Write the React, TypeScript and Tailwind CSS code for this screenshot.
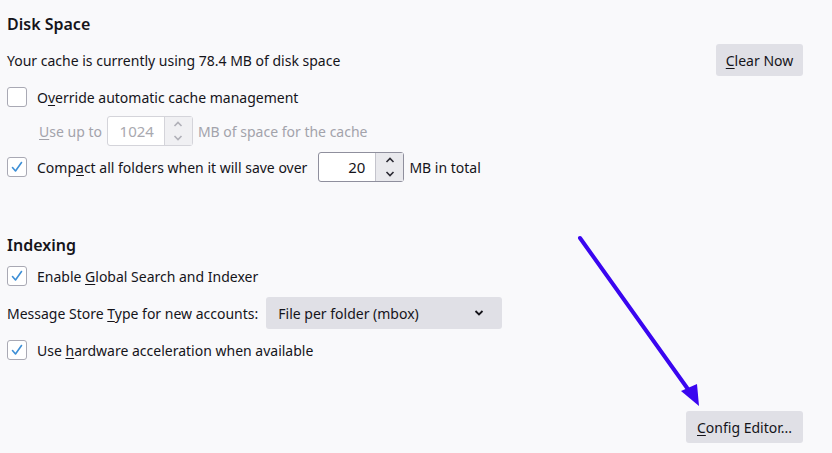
import React from 'react';

const font = { fontFamily: '"Noto Sans", "Open Sans", sans-serif' };

const Check = ({ checked }: { checked?: boolean }) => (
  <div className="w-[20px] h-[20px] shrink-0 rounded-[3px] border border-[#a9a9b4] bg-white flex items-center justify-center">
    {checked && (
      <svg width="14" height="14" viewBox="0 0 14 14">
        <path d="M2.5 7.5 L5.5 11 L11.5 2.5" fill="none" stroke="#3d8fd6" strokeWidth="1.6" strokeLinecap="round" strokeLinejoin="round" />
      </svg>
    )}
  </div>
);

const Spin = ({ value, disabled }: { value: string; disabled?: boolean }) => (
  <div
    className={`flex h-[30px] w-[86px] rounded-[3px] border ${
      disabled ? 'border-[#d4d4da] text-[#a9a9b0]' : 'border-[#8f8f9d] text-[#15141a]'
    } bg-white`}
  >
    <div className="flex-1 flex items-center justify-end pr-[10px] text-[15px]">{value}</div>
    <div className={`w-[28px] flex flex-col border-l ${disabled ? 'border-[#d4d4da] bg-[#f0f0f3]' : 'border-[#c4c4cc] bg-[#e9e9ed]'}`}>
      <div className="flex-1 flex items-center justify-center">
        <svg width="10" height="6" viewBox="0 0 10 6">
          <path d="M1.5 5 L5 1.5 L8.5 5" fill="none" stroke={disabled ? '#b0b0b8' : '#2b2a33'} strokeWidth="1.6" />
        </svg>
      </div>
      <div className="flex-1 flex items-center justify-center">
        <svg width="10" height="6" viewBox="0 0 10 6">
          <path d="M1.5 1 L5 4.5 L8.5 1" fill="none" stroke={disabled ? '#b0b0b8' : '#2b2a33'} strokeWidth="1.6" />
        </svg>
      </div>
    </div>
  </div>
);

export default function App() {
  return (
    <div
      className="relative w-[832px] h-[453px] overflow-hidden bg-[#f9f9fb] pl-[7px] pr-[29px] pt-[12px] text-[14px] text-[#15141a]"
      style={font}
    >
      <h2 className="h-[24px] leading-[24px] text-[16px] font-semibold">Disk Space</h2>

      <div className="mt-[8px] h-[32px] flex items-center justify-between">
        <span>Your cache is currently using 78.4 MB of disk space</span>
        <button className="h-[32px] w-[87px] rounded-[3px] bg-[#e0e0e6]">
          <span className="underline underline-offset-2">C</span>lear Now
        </button>
      </div>

      <div className="mt-[11px] h-[20px] flex items-center gap-[10px]">
        <Check />
        <span>
          O<span className="underline underline-offset-2">v</span>erride automatic cache management
        </span>
      </div>

      <div className="mt-[9px] ml-[32px] h-[30px] flex items-center gap-[5px] text-[#a3a3ab]">
        <span>
          <span className="underline underline-offset-2">U</span>se up to
        </span>
        <Spin value="1024" disabled />
        <span>MB of space for the cache</span>
      </div>

      <div className="mt-[6px] h-[30px] flex items-center">
        <Check checked />
        <span className="ml-[10px] mr-[11px]">
          Comp<span className="underline underline-offset-2">a</span>ct all folders when it will save over
        </span>
        <Spin value="20" />
        <span className="ml-[5px]">MB in total</span>
      </div>

      <h2 className="mt-[51px] h-[24px] leading-[24px] text-[16px] font-semibold">Indexing</h2>

      <div className="mt-[9px] h-[20px] flex items-center gap-[10px]">
        <Check checked />
        <span>
          Enable <span className="underline underline-offset-2">G</span>lobal Search and Indexer
        </span>
      </div>

      <div className="mt-[11px] h-[32px] flex items-center">
        <span>
          Message Store <span className="underline underline-offset-2">T</span>ype for new accounts:
        </span>
        <div className="ml-[8px] h-[32px] w-[236px] rounded-[3px] bg-[#e0e0e6] flex items-center justify-between pl-[12px] pr-[18px]">
          <span>File per folder (mbox)</span>
          <svg width="10" height="6" viewBox="0 0 10 6">
            <path d="M1.5 1 L5 4.5 L8.5 1" fill="none" stroke="#15141a" strokeWidth="1.8" />
          </svg>
        </div>
      </div>

      <div className="mt-[11px] h-[20px] flex items-center gap-[10px]">
        <Check checked />
        <span>
          Use <span className="underline underline-offset-2">h</span>ardware acceleration when available
        </span>
      </div>

      <div className="mt-[51px] flex justify-end">
        <button className="h-[32px] w-[117px] rounded-[3px] bg-[#e0e0e6]">
          <span className="underline underline-offset-2">C</span>onfig Editor...
        </button>
      </div>

      <svg className="absolute left-0 top-0 pointer-events-none" width="832" height="453">
        <line x1="580" y1="238" x2="690" y2="392" stroke="#3a06f0" strokeWidth="4" strokeLinecap="round" />
        <polygon points="699,406 681,391 697,384" fill="#3a06f0" />
      </svg>
    </div>
  );
}
